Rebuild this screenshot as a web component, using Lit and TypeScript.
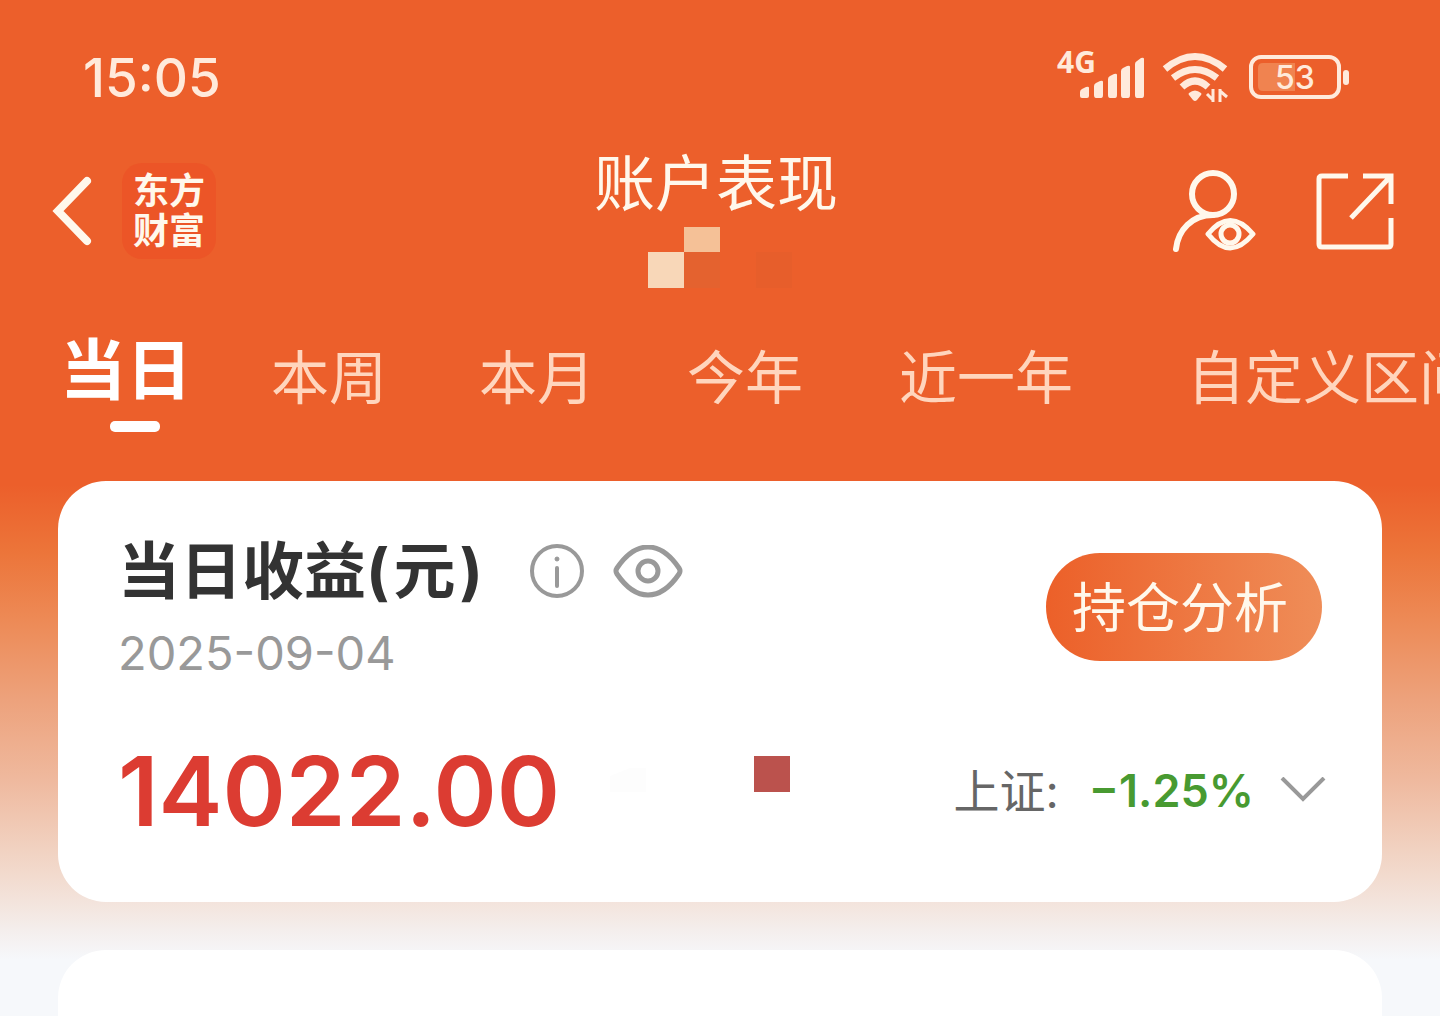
import { LitElement, html, css } from "lit";
import { customElement, property, state } from "lit/decorators.js";
import { classMap } from "lit/directives/class-map.js";

const fontStack = css`Inter, "Noto Sans CJK SC", sans-serif`;

@customElement("status-bar")
export class StatusBar extends LitElement {
  @property() time = "";
  @property() battery = "";

  static styles = css`
    :host {
      display: flex;
      align-items: center;
      justify-content: space-between;
      padding: 48px 90px 0 83px;
      color: #ffeadb;
      font-family: ${fontStack};
    }
    .time {
      font-size: 53px;
      line-height: 60px;
      font-weight: 500;
    }
    .icons {
      display: flex;
      align-items: center;
      gap: 18px;
    }
    svg {
      display: block;
      fill: currentColor;
      overflow: visible;
    }
    .network {
      font: 700 30px "Noto Sans", sans-serif;
    }
    .charge {
      font: 500 32px ${fontStack};
      text-anchor: middle;
    }
    .outline {
      fill: none;
      stroke: currentColor;
    }
  `;

  render() {
    return html`
      <span class="time">${this.time}</span>
      <div class="icons">
        <svg width="88" height="52" viewBox="0 0 88 52" role="img" aria-label="4G">
          <text class="network" x="1" y="21">4G</text>
          <path d="M24 44v-4q0-2 2-3l4-2q3-1 3 1v8q0 2-2 2h-5q-2 0-2-2z" />
          <path d="M38 43v-9q0-2 2-3l4-2q3-1 3 1v13q0 3-2 3h-5q-2 0-2-3z" />
          <path d="M52 43V27q0-2 2-3l4-2q3-1 3 1v20q0 3-2 3h-5q-2 0-2-3z" />
          <path d="M65 43V19q0-2 2-3l4-2q3-1 3 1v28q0 3-2 3h-5q-2 0-2-3z" />
          <path d="M79 43V12q0-2 2-3l4-3q3-1 3 1v36q0 3-2 3h-5q-2 0-2-3z" />
        </svg>
        <svg width="68" height="52" viewBox="0 0 68 52" role="img" aria-label="Wi-Fi">
          <g class="outline" stroke-width="7">
            <path d="M3 17Q33-8 63 17" />
            <path d="M11 26Q33 9 55 26" />
            <path d="M20 35Q33 23 46 35" />
          </g>
          <path d="M27 41q6-5 12 0q1 1 0 2l-4 5q-2 2-4 0l-4-5q-1-1 0-2z" />
          <path class="outline" stroke-width="3" d="M51 37v13M51 48l-6-6M58 50V37M58 39l7 6" />
        </svg>
        <svg width="102" height="46" viewBox="0 0 102 46" role="img" aria-label="Battery">
          <rect class="outline" x="3" y="2" width="88" height="40" rx="10" stroke-width="4" />
          <path d="M15 8h32v28H15q-5 0-5-5V13q0-5 5-5z" fill="#f08350" />
          <rect x="95" y="15" width="6" height="15" rx="3" />
          <text class="charge" x="47" y="34">${this.battery}</text>
        </svg>
      </div>
    `;
  }
}

@customElement("page-header")
export class PageHeader extends LitElement {
  static styles = css`
    :host {
      display: grid;
      grid-template-columns: 1fr auto 1fr;
      align-items: start;
      padding: 40px 46px 0 38px;
      color: #fff8ec;
      font-family: ${fontStack};
    }
    .side {
      display: flex;
      align-items: center;
      height: 96px;
      margin-top: 15px;
    }
    .end {
      justify-content: flex-end;
      gap: 60px;
    }
    button {
      display: block;
      padding: 0;
      border: 0;
      background: none;
      color: inherit;
      cursor: pointer;
    }
    svg {
      display: block;
      fill: none;
      stroke: currentColor;
    }
    .back {
      padding: 0 10px 0 12px;
    }
    .brand {
      display: grid;
      place-content: center;
      width: 94px;
      height: 96px;
      margin-left: 20px;
      border-radius: 20px;
      background: #ec5527;
      font-size: 36px;
      line-height: 40px;
      font-weight: 700;
      text-decoration: none;
      color: inherit;
    }
    .brand span {
      display: block;
    }
    .middle {
      display: grid;
      gap: 7px;
    }
    h1 {
      margin: 0;
      font-size: 61px;
      line-height: 72px;
      font-weight: 400;
    }
    .mosaic {
      stroke: none;
    }
  `;

  render() {
    return html`
      <div class="side">
        <button class="back" aria-label="返回">
          <svg width="42" height="70" viewBox="0 0 42 70" stroke-width="8" stroke-linecap="round" stroke-linejoin="miter">
            <path d="M37 5L8 35l29 30" />
          </svg>
        </button>
        <a class="brand" href="#home"><span>东方</span><span>财富</span></a>
      </div>
      <div class="middle">
        <h1>账户表现</h1>
        <svg class="mosaic" width="244" height="61" viewBox="0 0 244 61" aria-hidden="true">
          <path fill="#f5c197" d="M90 0h36v25H90z" />
          <path fill="#f8d7b8" d="M54 25h36v36H54z" />
          <path fill="#e4622f" d="M90 25h36v36H90z" />
          <path fill="#e75e2b" d="M162 25h36v36h-36z" />
        </svg>
      </div>
      <div class="side end">
        <button aria-label="查看账户">
          <svg width="84" height="82" viewBox="0 0 84 82" stroke-width="6">
            <circle cx="41" cy="24" r="21" />
            <path d="M4 79C6 60 20 45 41 45" stroke-linecap="round" />
            <path d="M36 64Q58 37 81 64Q58 92 36 64z" stroke-width="5" stroke-linejoin="round" />
            <circle cx="58" cy="64" r="9" stroke-width="5" />
          </svg>
        </button>
        <button aria-label="分享">
          <svg width="78" height="78" viewBox="0 0 78 78" stroke-width="5">
            <path d="M32 4H6Q3 4 3 7v65q0 3 3 3h66q3 0 3-3V46M47 4h28v28M74 5L35 46" />
          </svg>
        </button>
      </div>
    `;
  }
}

@customElement("period-tabs")
export class PeriodTabs extends LitElement {
  @state() private selected = 0;

  private tabs = ["当日", "本周", "本月", "今年", "近一年", "自定义区间"];

  static styles = css`
    :host {
      display: block;
      padding: 40px 0 0 60px;
      overflow: hidden;
      font-family: ${fontStack};
    }
    .list {
      display: flex;
      align-items: flex-start;
      height: 104px;
    }
    .tab {
      flex: none;
      margin: 8px 0 0 92px;
      padding: 0;
      border: 0;
      background: none;
      color: #ffd5bd;
      font: 400 58px/84px ${fontStack};
      white-space: nowrap;
      cursor: pointer;
    }
    .tab.active {
      display: grid;
      gap: 9px;
      min-width: 150px;
      margin: 0;
      color: #fff;
      font-size: 66px;
      font-weight: 700;
      text-align: left;
    }
    .tab.active::after {
      content: "";
      justify-self: center;
      width: 50px;
      height: 11px;
      border-radius: 5px;
      background: #fff;
    }
    .tab.active + .tab {
      margin-left: 61px;
    }
    .tab.long {
      margin-left: 96px;
    }
    .tab.long + .long {
      margin-left: 114px;
    }
  `;

  render() {
    return html`
      <div class="list" role="tablist">
        ${this.tabs.map(
          (label, i) => html`<button
            role="tab"
            aria-selected=${i === this.selected}
            class=${classMap({ tab: true, active: i === this.selected, long: label.length > 2 })}
            @click=${() => (this.selected = i)}
          >${label}</button>`
        )}
      </div>
    `;
  }
}

@customElement("profit-card")
export class ProfitCard extends LitElement {
  static styles = css`
    :host {
      display: block;
      padding: 55px 60px 56px;
      border-radius: 48px;
      background: #fff;
      font-family: ${fontStack};
    }
    button {
      padding: 0;
      border: 0;
      background: none;
      color: inherit;
      font-family: inherit;
      cursor: pointer;
    }
    svg {
      display: block;
      fill: none;
      stroke: currentColor;
    }
    .row {
      display: flex;
      align-items: flex-start;
      justify-content: space-between;
    }
    .heading {
      display: flex;
      align-items: center;
      color: #999;
    }
    h2 {
      margin: 0;
      color: #333;
      font-size: 62px;
      line-height: 72px;
      font-weight: 700;
    }
    .unit {
      padding: 0 4px;
    }
    .info {
      margin-left: 46px;
    }
    .eye {
      margin-left: 28px;
    }
    time {
      display: block;
      margin-top: 15px;
      color: #999;
      font-size: 47px;
      line-height: 60px;
    }
    .analysis {
      margin-top: 17px;
      padding: 4px 34px 0 26px;
      border-radius: 54px;
      background: linear-gradient(90deg, #ec6029, #ef8d58);
      color: #fff8ec;
      font-size: 54px;
      line-height: 104px;
    }
    .figures {
      display: flex;
      align-items: center;
      margin-top: 53px;
    }
    .amount {
      color: #dc3c32;
      font-size: 96px;
      line-height: 110px;
      font-weight: 600;
    }
    .mosaic {
      margin: 0 auto 34px 50px;
      stroke: none;
    }
    .index {
      display: flex;
      align-items: center;
      margin-right: -4px;
      color: #666;
      font-size: 46px;
      line-height: 60px;
    }
    .change {
      margin: 0 26px 0 30px;
      color: #489a31;
      font-size: 45px;
      font-weight: 600;
    }
    .chevron {
      color: #999;
    }
  `;

  render() {
    return html`
      <div class="row">
        <div>
          <div class="heading">
            <h2>当日收益(<span class="unit">元</span>)</h2>
            <button class="info" aria-label="说明">
              <svg width="56" height="56" viewBox="0 0 56 56" stroke-width="4">
                <circle cx="28" cy="27" r="25" />
                <path d="M28 24v18" stroke-linecap="round" />
                <circle cx="28" cy="15" r="2" fill="currentColor" stroke-width="1" />
              </svg>
            </button>
            <button class="eye" aria-label="显示金额">
              <svg width="70" height="54" viewBox="0 0 70 54" stroke-width="5">
                <path d="M4 23C23-5 47-5 66 23Q68 26 66 29C47 57 23 57 4 29Q2 26 4 23z" />
                <circle cx="35" cy="26" r="10" stroke-width="5" />
              </svg>
            </button>
          </div>
          <time datetime="2025-09-04">2025-09-04</time>
        </div>
        <button class="analysis">持仓分析</button>
      </div>
      <div class="figures">
        <span class="amount">14022.00</span>
        <svg class="mosaic" width="180" height="36" viewBox="0 0 180 36" aria-hidden="true">
          <path fill="#fdfdfd" d="M0 20L20 12h16v24H0z" />
          <path fill="#bb524d" d="M144 0h36v36h-36z" />
        </svg>
        <button class="index">
          <span>上证:</span>
          <span class="change">−1.25%</span>
          <svg class="chevron" width="46" height="28" viewBox="0 0 46 28" stroke-width="4">
            <path d="M2 1l21 21L44 1" />
          </svg>
        </button>
      </div>
    `;
  }
}

@customElement("app-root")
export class AppRoot extends LitElement {
  static styles = css`
    :host {
      display: flex;
      flex-direction: column;
      min-height: 100vh;
      overflow: hidden;
      background: linear-gradient(
        #ec5f2b 485px,
        #ec7439 550px,
        #ed8a56 620px,
        #eda27c 700px,
        #efb99e 780px,
        #f1d2c1 850px,
        #f3e3db 900px,
        #f4eeec 930px,
        #f6f8fb 960px
      );
    }
    main {
      display: flex;
      flex: 1;
      flex-direction: column;
      gap: 48px;
      padding: 49px 58px 0;
    }
    .next {
      flex: 1;
      min-height: 66px;
      border-radius: 48px 48px 0 0;
      background: #fff;
    }
  `;

  render() {
    return html`
      <status-bar time="15:05" battery="53"></status-bar>
      <page-header></page-header>
      <period-tabs></period-tabs>
      <main>
        <profit-card></profit-card>
        <section class="next"></section>
      </main>
    `;
  }
}
